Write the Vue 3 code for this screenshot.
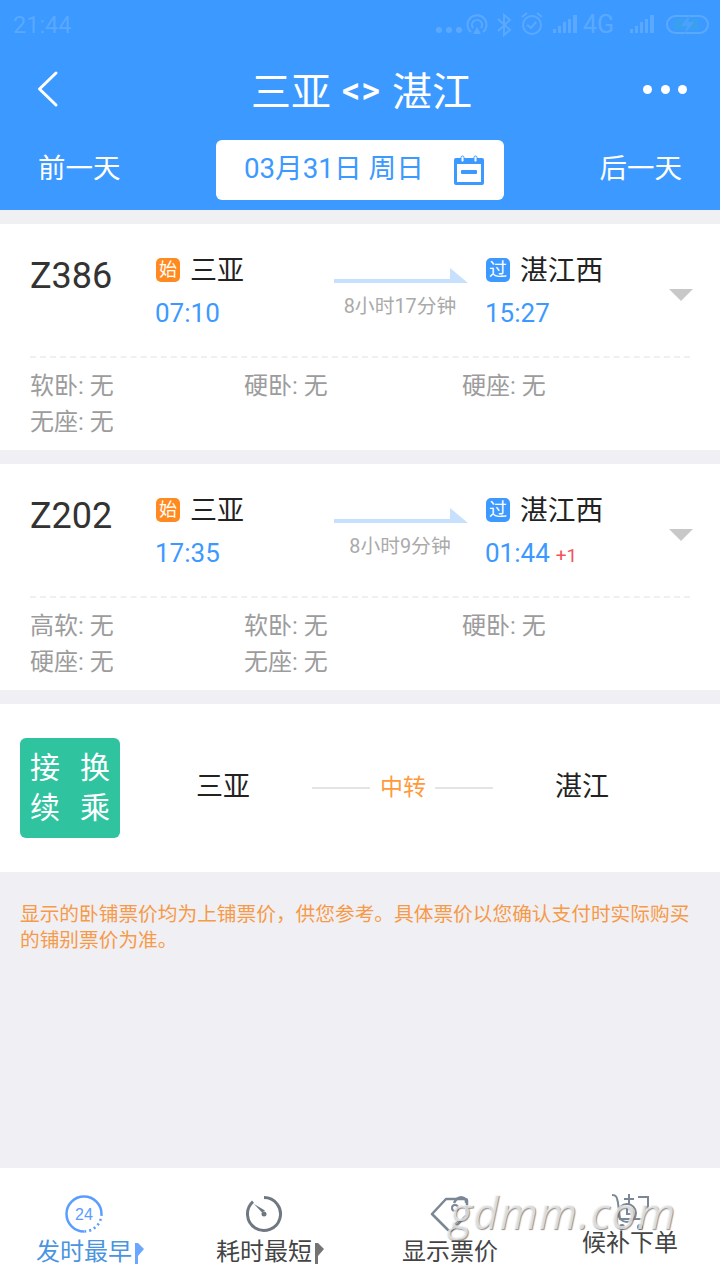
<script setup>
const trains = [
  { no: 'Z386', from: '三亚', dep: '07:10', dur: '8小时17分钟', to: '湛江西', arr: '15:27', plus: '', seats: ['软卧: 无', '硬卧: 无', '硬座: 无', '无座: 无'] },
  { no: 'Z202', from: '三亚', dep: '17:35', dur: '8小时9分钟', to: '湛江西', arr: '01:44', plus: '+1', seats: ['高软: 无', '软卧: 无', '硬卧: 无', '硬座: 无', '无座: 无'] }
]
</script>

<template>
  <div class="page">
    <header class="head">
      <div class="status">
        <span class="clock">21:44</span>
        <svg class="status-icons" width="276" height="34" viewBox="436 8 276 34">
          <g fill="#fff" stroke="none">
            <circle cx="439" cy="30" r="3" /><circle cx="449" cy="30" r="3" /><circle cx="459" cy="30" r="3" />
            <rect x="553" y="29" width="3" height="4" /><rect x="558" y="26" width="3" height="7" /><rect x="563" y="22" width="3" height="11" /><rect x="568" y="19" width="3" height="14" /><rect x="573" y="15" width="4" height="18" />
            <rect x="630" y="29" width="3" height="4" /><rect x="635" y="26" width="3" height="7" /><rect x="640" y="22" width="3" height="11" /><rect x="645" y="19" width="3" height="14" /><rect x="650" y="15" width="4" height="18" />
            <text x="583" y="33" font-size="25" font-family="Roboto, sans-serif">4G</text>
            <path d="M473 34l4-7 4 7z" />
          </g>
          <g fill="none" stroke="#fff" stroke-width="2">
            <path d="M471 32a9.5 9.5 0 1 1 12 0" />
            <path d="M473 28a5 5 0 1 1 8 0" />
            <path d="M498 19l12 11-6 5V15l6 5-12 11" />
            <circle cx="532" cy="25" r="9" />
            <path d="M527 25l4 3 5-6M522 17l5-4M542 17l-5-4" />
            <rect x="667" y="16" width="41" height="17" rx="8.5" />
          </g>
          <rect x="674" y="19" width="24" height="11" fill="#2fc4a0" />
          <path d="M690 14l-9 12h6l-3 9 10-13h-6z" fill="#9fcbff" />
        </svg>
      </div>
      <div class="title-row">
        <svg class="back" width="24" height="40" viewBox="0 0 24 40">
          <path d="M20 4L3.500 20 20 36" fill="none" stroke="#fff" stroke-width="3" stroke-linecap="round" stroke-linejoin="round" />
        </svg>
        <div class="title">三亚<b>&lt;&gt;</b>湛江</div>
        <div class="dots"><i></i><i></i><i></i></div>
      </div>
      <div class="date-row">
        <span class="side">前一天</span>
        <div class="date-pill">
          <span class="side">03月31日 周日</span>
          <svg width="30" height="30" viewBox="0 0 30 30">
            <path d="M2 3h26a2 2 0 0 1 2 2v23a2 2 0 0 1-2 2H2a2 2 0 0 1-2-2V5a2 2 0 0 1 2-2z" fill="#3c99ff" />
            <rect x="3" y="9" width="24" height="18" fill="#fff" />
            <rect x="7" y="1" width="3" height="6" rx="1.500" fill="#fff" stroke="#3c99ff" stroke-width="1" />
            <rect x="20" y="1" width="3" height="6" rx="1.500" fill="#fff" stroke="#3c99ff" stroke-width="1" />
            <rect x="7" y="15" width="16" height="4" rx="1" fill="#3c99ff" />
          </svg>
        </div>
        <span class="side">后一天</span>
      </div>
    </header>

    <section v-for="t in trains" :key="t.no" class="card">
      <div class="main">
        <div class="no">{{ t.no }}</div>
        <div class="stop">
          <div class="name"><span class="badge orange">始</span><span>{{ t.from }}</span></div>
          <div class="time">{{ t.dep }}</div>
        </div>
        <div class="path">
          <svg width="134" height="16" viewBox="0 0 134 16">
            <path d="M0 11h116V0l18 15H0z" fill="#c6e0fe" />
          </svg>
          <div class="dur">{{ t.dur }}</div>
        </div>
        <div class="stop to">
          <div class="name"><span class="badge blue">过</span><span>{{ t.to }}</span></div>
          <div class="time">{{ t.arr }}<small v-if="t.plus">{{ t.plus }}</small></div>
        </div>
        <div class="caret"></div>
      </div>
      <div class="seats">
        <span v-for="s in t.seats" :key="s">{{ s }}</span>
      </div>
    </section>

    <section class="transfer">
      <div class="tile"><span>接</span><span>换</span><span>续</span><span>乘</span></div>
      <div class="city first">三亚</div>
      <div class="via"><i></i><span>中转</span><i></i></div>
      <div class="city">湛江</div>
    </section>

    <p class="note">显示的卧铺票价均为上铺票价，供您参考。具体票价以您确认支付时实际购买的铺别票价为准。</p>

    <nav class="tabs">
      <div class="tab active shifted">
        <svg width="38" height="38" viewBox="0 0 38 38">
          <path d="M19 36.500A17.500 17.500 0 1 1 36.500 19" fill="none" stroke="#5b9dff" stroke-width="2.500" />
          <path d="M36.500 19A17.500 17.500 0 0 1 19 36.500" fill="none" stroke="#5b9dff" stroke-width="2.500" stroke-dasharray="2 3" />
          <text x="19" y="24.500" text-anchor="middle" font-size="16" fill="#5b9dff" font-family="Liberation Sans, sans-serif">24</text>
        </svg>
        <div class="label">发时最早<u class="flag"></u></div>
      </div>
      <div class="tab shifted">
        <svg width="38" height="38" viewBox="0 0 38 38">
          <path d="M19 2.500A16.500 16.500 0 1 1 8 6.700" fill="none" stroke="#6f7780" stroke-width="3" />
          <path d="M9 9l8 8.500 3-2z" fill="#6f7780" />
          <circle cx="19" cy="19" r="2.500" fill="#6f7780" />
        </svg>
        <div class="label">耗时最短<u class="flag"></u></div>
      </div>
      <div class="tab">
        <svg width="40" height="38" viewBox="0 0 40 38">
          <path d="M2 19L16 4h19a2 2 0 0 1 2 2v14L22 35a3 3 0 0 1-4 0z" fill="none" stroke="#7b8794" stroke-width="2.500" stroke-linejoin="round" />
          <path d="M24 8c4-8 13-7 12 0" fill="none" stroke="#7b8794" stroke-width="2.500" />
          <circle cx="25" cy="13" r="3" fill="none" stroke="#7b8794" stroke-width="2" />
        </svg>
        <div class="label">显示票价</div>
      </div>
      <div class="tab raised">
        <svg width="40" height="38" viewBox="0 0 40 38">
          <path d="M2 2c5 0 5 3 6 8l2 16h22" fill="none" stroke="#7b8794" stroke-width="2" />
          <path d="M14 6h10M19 1v10M28 4h10v12" fill="none" stroke="#7b8794" stroke-width="2" />
          <circle cx="17" cy="20" r="9" fill="none" stroke="#7b8794" stroke-width="2" />
          <path d="M17 15v6h4" fill="none" stroke="#7b8794" stroke-width="2" />
          <circle cx="12" cy="34" r="3" fill="#7b8794" /><circle cx="30" cy="34" r="3" fill="#7b8794" />
        </svg>
        <div class="label">候补下单</div>
      </div>
      <div class="mark">gdmm.com</div>
    </nav>
  </div>
</template>

<style scoped>
.page {
  width: 720px;
  height: 1280px;
  display: flex;
  flex-direction: column;
  overflow: hidden;
  background: #efeff4;
  font-family: Roboto, "Noto Sans CJK SC", sans-serif;
  color: #333;
}
.head { background: #3c99ff; color: #fff; height: 210px; flex: none; }
.status {
  height: 50px;
  display: flex;
  align-items: flex-start;
  justify-content: space-between;
  padding: 8px 8px 0 13px;
  box-sizing: border-box;
}
.clock { font-size: 23.500px; line-height: 34px; color: rgba(255, 255, 255, 0.16); }
.status-icons { opacity: 0.16; }
.title-row {
  height: 80px;
  display: grid;
  grid-template-columns: 1fr auto 1fr;
  align-items: center;
  padding: 0 33px 0 36px;
}
.back { display: block; margin-top: -2px; }
.title { font-size: 40px; line-height: 50px; margin: 5px 0 0 0; white-space: nowrap; display: flex; align-items: center; }
.title b { font-size: 36px; font-weight: 500; width: 40px; margin: -3px 10.500px 0; text-align: center; letter-spacing: 1px; }
.dots { display: flex; gap: 8.500px; justify-self: end; margin-top: -2px; }
.dots i { width: 9px; height: 9px; border-radius: 50%; background: #fff; }
.date-row {
  height: 60px;
  margin-top: 10px;
  display: flex;
  align-items: center;
  justify-content: space-between;
  padding: 0 38px;
  font-size: 27.500px;
}
.side { margin-top: -8px; }
.date-pill {
  width: 288px;
  height: 60px;
  box-sizing: border-box;
  background: #fff;
  border-radius: 6px;
  color: #3c99ff;
  display: flex;
  align-items: center;
  justify-content: space-between;
  padding: 0 20px 0 28px;
  font-size: 27.700px;
}
.card { background: #fff; margin-top: 14px; height: 226px; flex: none; padding: 0 30px; box-sizing: border-box; }
.main { height: 134px; display: flex; border-bottom: 2px dashed #f0f0f0; box-sizing: border-box; position: relative; }
.no { width: 126px; font-size: 36px; line-height: 104px; color: #333; }
.stop { padding-top: 26px; }
.stop:not(.to) { width: 178px; }
.name { display: flex; align-items: center; height: 36px; font-size: 27px; color: #222; }
.to .name { font-size: 27.700px; }
.name .badge {
  display: flex; align-items: center; justify-content: center;
  width: 24px; height: 24px; margin: 3px 10px 0 0; flex: none;
  border-radius: 5px; color: #fff; font-size: 18px; line-height: 24px;
}
.name .orange { background: #ff8a1f; }
.name .blue { background: #3c99ff; }
.time { margin: 10px 0 0 -1px; font-size: 26px; line-height: 34px; color: #3c99ff; }
.time small { margin-left: 6px; font-size: 19px; color: #f4525c; }
.path { width: 152px; padding-top: 44px; }
.path svg { display: block; }
.dur { width: 134px; margin: 9px 0 0 -1px; text-align: center; font-size: 19.800px; line-height: 28px; color: #aaa; white-space: nowrap; }
.caret {
  position: absolute; right: -3px; top: 65px;
  width: 0; height: 0;
  border-left: 12px solid transparent; border-right: 12px solid transparent;
  border-top: 12px solid #c8c8c8;
}
.seats {
  display: grid;
  grid-template-columns: 214px 218px 1fr;
  grid-auto-rows: 36px;
  padding-top: 10px;
  font-size: 24px;
  line-height: 36px;
  color: #9c9c9c;
}
.transfer {
  margin-top: 14px; height: 168px; flex: none; background: #fff;
  display: flex; align-items: center; padding: 0 0 0 20px; box-sizing: border-box; position: relative;
}
.tile {
  width: 100px; height: 100px; flex: none; border-radius: 6px; background: #2fc49f; color: #fff;
  display: grid; grid-template-columns: 30px 30px; align-content: center; justify-content: center;
  font-size: 30px; line-height: 40px; column-gap: 20px;
}
.city { font-size: 27px; line-height: 40px; margin-top: -2px; color: #222; width: 54px; flex: none; white-space: nowrap; }
.city.first { margin-left: 76px; }
.via { display: flex; align-items: center; margin: 0 62px 0 62px; color: #ff9a3c; font-size: 23px; line-height: 32px; }
.via i { width: 58px; height: 2px; background: #e4e4e4; }
.via span { margin: 0 10px; width: 45px; white-space: nowrap; }
.note { margin: 30px 20px 0; font-size: 19.700px; line-height: 26px; color: #f79a48; flex: 1; }
.tabs {
  height: 112px; flex: none; background: #fff;
  display: grid; grid-template-columns: repeat(4, 180px); position: relative;
}
.tab { display: flex; flex-direction: column; align-items: center; padding-top: 27px; position: relative; }
.tab.shifted { padding-right: 12px; }
.tab svg { display: block; }
.tab.raised { padding-top: 25px; }
.label { margin-top: 3px; font-size: 24px; line-height: 32px; color: #444; position: relative; white-space: nowrap; }
.tab.raised .label { margin-top: -4px; }
.active .label { color: #4a94e0; }
.flag { position: absolute; left: 99px; top: 7px; width: 2.500px; height: 21px; background: #5b9dff; opacity: 0.9; }
.tab:not(.active) .flag { background: #666; }
.flag::after {
  content: ""; position: absolute; left: 2.500px; top: 0;
  border-left: 6px solid #5b9dff; border-top: 6px solid transparent; border-bottom: 7px solid transparent;
}
.tab:not(.active) .flag::after { border-left-color: #666; }
.mark {
  position: absolute; left: 449px; top: 22px;
  font-family: "Open Sans", sans-serif; font-style: italic; font-weight: 400;
  font-size: 44px; line-height: 44px; letter-spacing: 1px;
  color: rgba(243, 243, 243, 0.75);
  text-shadow: 1px 1px 1px rgba(100, 100, 100, 0.7);
}
</style>

<style>
body { margin: 0; }
</style>
